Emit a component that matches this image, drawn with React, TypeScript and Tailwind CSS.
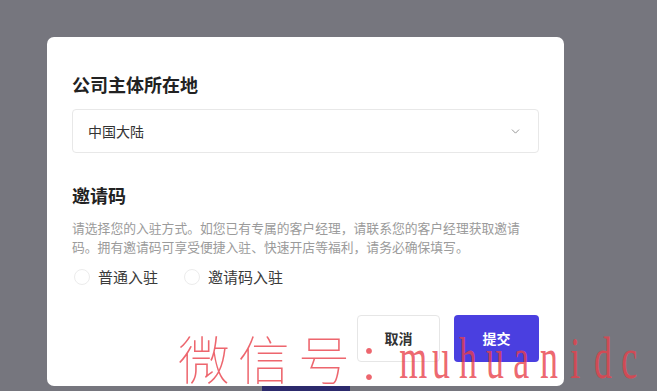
import React, { useState } from 'react'
import { ChevronDown } from 'lucide-react'

const font = { fontFamily: '"Noto Sans CJK SC", "Noto Sans", sans-serif' }

const Radio = ({ label, checked, onClick }: { label: string; checked: boolean; onClick: () => void }) => (
	<button onClick={onClick} className="flex items-center gap-2">
		<span className="flex h-4 w-4 items-center justify-center rounded-full border border-[#ececec] bg-white">
			{checked && <span className="h-2 w-2 rounded-full bg-[#4a3fe0]" />}
		</span>
		<span className="text-[15px] leading-[22px] text-[#3a3a3a]">{label}</span>
	</button>
)

const Watermark = () => (
	<div className="pointer-events-none absolute left-[178px] top-[332px] flex items-end text-[#e8404a]/80">
		<span className="w-[60px] text-[52px] leading-[52px] font-thin">微</span>
		<span className="w-[60px] text-[52px] leading-[52px] font-thin">信</span>
		<span className="w-[58px] text-[52px] leading-[52px] font-thin">号</span>
		<span className="w-[44px] text-[52px] leading-[52px] font-thin">：</span>
		<div className="flex" style={{ fontFamily: '"Liberation Serif", serif' }}>
			{'muhuanidc'.split('').map((c, i) => (
				<span key={i} className="flex w-[27px] justify-center text-[60px] leading-[52px]">
					<span className="inline-block scale-x-[0.6]">{c}</span>
				</span>
			))}
		</div>
	</div>
)

export default function App() {
	const [mode, setMode] = useState<'normal' | 'invite' | null>(null)

	return (
		<div className="relative h-[391px] w-[657px] overflow-hidden bg-[#76767e]" style={font}>
			<div className="flex flex-col pt-[37px]">
				<div className="ml-[47px] flex w-[517px] flex-col rounded-[7px] bg-white px-[25px] pb-[24px] pt-[34px]">
					<h2 className="text-[18px] font-semibold leading-[26px] text-[#222]">公司主体所在地</h2>
					<div className="mt-[12px] flex h-[44px] items-center justify-between rounded border border-[#e8e8e8] pl-[15px] pr-[16px]">
						<span className="text-[14px] text-[#333]">中国大陆</span>
						<ChevronDown size={13} strokeWidth={1.6} className="text-[#888]" />
					</div>

					<h2 className="mt-[29px] text-[18px] font-semibold leading-[26px] text-[#222]">邀请码</h2>
					<p className="mt-[10px] w-[462px] text-[12.8px] leading-[19px] text-[#9b9b9b]">
						请选择您的入驻方式。如您已有专属的客户经理，请联系您的客户经理获取邀请码。拥有邀请码可享受便捷入驻、快速开店等福利，请务必确保填写。
					</p>
					<div className="mt-[10px] flex items-center gap-[26px] pl-[2px]">
						<Radio label="普通入驻" checked={mode === 'normal'} onClick={() => setMode('normal')} />
						<Radio label="邀请码入驻" checked={mode === 'invite'} onClick={() => setMode('invite')} />
					</div>

					<div className="mt-[27px] flex justify-end gap-[14px]">
						<button className="h-[47px] w-[83px] rounded border border-[#e6e6e6] bg-white text-[14px] font-semibold text-[#333]">
							取消
						</button>
						<button className="h-[47px] w-[85px] rounded bg-[#4a3fe0] text-[14px] font-semibold text-white">
							提交
						</button>
					</div>
				</div>
				<div className="ml-[262px] h-[8px] w-[88px] bg-[#2c2a6c]" />
			</div>
			<Watermark />
		</div>
	)
}
